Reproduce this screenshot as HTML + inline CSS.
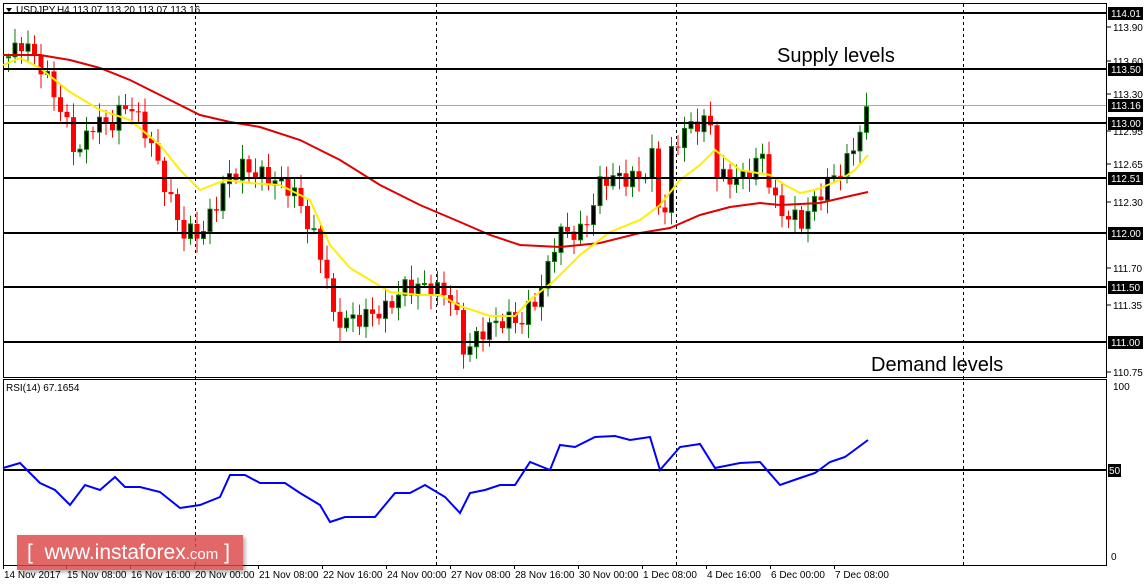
<!DOCTYPE html>
<html><head><meta charset="utf-8"><style>
body{margin:0;width:1147px;height:585px;overflow:hidden;background:#fff;font-family:"Liberation Sans",sans-serif}
svg{position:absolute;left:0;top:0}
.logo{position:absolute;left:17px;top:535px;width:226px;height:35px;background:rgba(220,70,70,0.82);box-shadow:2px 2px 4px rgba(0,0,0,0.35);color:#fff;font-size:21px;line-height:35px;white-space:nowrap}
</style></head><body>
<svg id="s" width="1147" height="585" xmlns="http://www.w3.org/2000/svg" font-family="Liberation Sans, sans-serif"></svg>
<div class="logo"><span style="margin-left:10px">[&nbsp; www.instaforex<span style="font-size:15px">.com</span> ]</span></div>
<script>
var s=document.getElementById('s'),h='';
function Y(p){return 13+(114.01-p)*109.3}
// frames
h+='<rect x="3.5" y="3.5" width="1103" height="374" fill="none" stroke="#000"/>';
h+='<rect x="3.5" y="379.5" width="1103" height="186" fill="none" stroke="#000"/>';
// dashed verticals
[195,436,676,963].forEach(function(x){h+='<line x1="'+x+'.5" y1="4" x2="'+x+'.5" y2="565" stroke="#000" stroke-dasharray="3,3"/>'});
// gray current line
h+='<line x1="4" y1="105.5" x2="1106" y2="105.5" stroke="#aaa"/>';
// MAs
function pl(pts,c,w){h+='<polyline fill="none" stroke="'+c+'" stroke-width="'+w+'" points="'+pts.map(function(p){return p.join(',')}).join(' ')+'"/>'}
var yel=[[3,65],[20,58],[40,68],[70,92],[100,110],[130,120],[160,145],[180,170],[200,190],[225,180],[250,183],[280,185],[310,200],[330,245],[350,268],[370,280],[390,292],[420,295],[440,295],[460,306],[490,316],[515,316],[530,300],[555,280],[580,255],[610,232],[640,220],[660,205],[680,180],[700,165],[715,150],[740,170],[770,175],[785,185],[800,193],[815,190],[840,180],[855,170],[868,155]];
var red=[[3,55],[40,55],[70,60],[100,68],[130,80],[170,100],[200,115],[230,122],[260,127],[300,140],[340,160],[380,185],[420,205],[460,222],[490,235],[520,245],[560,247],[600,243],[640,233],[670,228],[700,215],[730,207],[760,203],[780,205],[820,203],[850,196],[868,192]];
// candles
var kp=[[5,113.6],[20,113.75],[40,113.5],[60,113.1],[75,112.7],[90,113.0],[110,113.0],[125,113.2],[145,112.9],[160,112.5],[180,112.0],[200,112.0],[225,112.5],[240,112.6],[265,112.5],[290,112.4],[310,112.0],[325,111.6],[330,111.2],[350,111.2],[385,111.3],[400,111.5],[430,111.5],[450,111.4],[462,110.9],[480,111.1],[500,111.2],[520,111.2],[540,111.5],[555,112.0],[580,112.0],[600,112.5],[615,112.5],[640,112.5],[650,112.7],[660,112.0],[670,112.8],[690,113.0],[710,113.0],[715,112.5],[740,112.5],[760,112.7],[775,112.2],[800,112.1],[820,112.4],[845,112.65],[860,113.0],[868,113.16]];
function ip(x){for(var i=1;i<kp.length;i++){if(x<=kp[i][0]){var a=kp[i-1],b=kp[i];return a[1]+(b[1]-a[1])*(x-a[0])/(b[0]-a[0])}}return kp[kp.length-1][1]}
var prev=113.6,i=0;
for(var x=6;x<=868;x+=6.5,i++){
 var c=ip(x)+Math.sin(i*2.3)*0.08,o=prev,hi=Math.max(o,c)+0.03+Math.abs(Math.sin(i*1.7))*0.1,lo=Math.min(o,c)-0.03-Math.abs(Math.cos(i*1.3))*0.1;
 var up=c>=o,col=up?'#0a7a0a':'#f00';
 h+='<line x1="'+(x+2.5)+'" y1="'+Y(hi)+'" x2="'+(x+2.5)+'" y2="'+Y(lo)+'" stroke="'+col+'"/>';
 var t=Y(Math.max(o,c)),bh=Math.max(1,Y(Math.min(o,c))-t);
 h+=up?'<rect x="'+(x+0.5)+'" y="'+t+'" width="4" height="'+bh+'" fill="#000" stroke="#0a7a0a"/>':'<rect x="'+x+'" y="'+t+'" width="5" height="'+bh+'" fill="#f00"/>';
 prev=c;
}
pl(red,'#e00000',2);pl(yel,'#ffee00',2);
// levels
[13,69,123,178,233,287,342].forEach(function(y){h+='<line x1="4" y1="'+y+'" x2="1106" y2="'+y+'" stroke="#000" stroke-width="2"/>'});
h+='<line x1="4" y1="470" x2="1106" y2="470" stroke="#000" stroke-width="2"/>';
// RSI
pl([[3,468],[20,463],[40,483],[55,490],[70,505],[85,485],[100,490],[115,477],[125,487],[140,487],[160,492],[180,508],[200,505],[220,497],[230,475],[245,475],[260,483],[285,483],[300,493],[320,505],[330,522],[345,517],[375,517],[395,493],[410,493],[425,485],[445,497],[460,513],[470,493],[485,490],[500,485],[515,485],[530,462],[550,470],[560,445],[575,447],[595,437],[615,436],[630,440],[650,437],[660,470],[680,447],[700,444],[715,468],[740,463],[760,462],[780,485],[800,478],[815,473],[830,462],[845,457],[868,440]],'#0000ff',2);
// texts
h+='<text x="16" y="13" font-size="10">USDJPY,H4  113.07 113.20 113.07 113.16</text><path d="M6 8h6l-3 4z" fill="#000"/>';
h+='<text x="6" y="391" font-size="10">RSI(14) 67.1654</text>';
h+='<text x="777" y="62" font-size="20">Supply levels</text><text x="871" y="371" font-size="20">Demand levels</text>';
// right axis
[[113.90,27],[113.60,61],[113.30,94],[112.95,131],[112.65,164],[112.30,202],[111.70,268],[111.35,305],[110.75,372]].forEach(function(a){h+='<line x1="1107" y1="'+a[1]+'" x2="1111" y2="'+a[1]+'" stroke="#000"/><text x="1113" y="'+(a[1]+4)+'" font-size="10">'+a[0].toFixed(2)+'</text>'});
[['114.01',13],['113.50',69],['113.16',105],['113.00',123],['112.51',178],['112.00',233],['111.50',287],['111.00',342]].forEach(function(a){h+='<rect x="1108" y="'+(a[1]-6)+'" width="35" height="13" fill="#000"/><text x="1111" y="'+(a[1]+4)+'" font-size="10" fill="#fff">'+a[0]+'</text>'});
h+='<text x="1113" y="390" font-size="10">100</text><rect x="1108" y="464" width="13" height="13" fill="#000"/><text x="1109" y="474" font-size="10" fill="#fff">50</text><text x="1111" y="560" font-size="10">0</text>';
// bottom axis
[['14 Nov 2017',3],['15 Nov 08:00',66],['16 Nov 16:00',130],['20 Nov 00:00',194],['21 Nov 08:00',258],['22 Nov 16:00',322],['24 Nov 00:00',386],['27 Nov 08:00',450],['28 Nov 16:00',514],['30 Nov 00:00',578],['1 Dec 08:00',642],['4 Dec 16:00',706],['6 Dec 00:00',770],['7 Dec 08:00',834]].forEach(function(a){h+='<line x1="'+(a[1]+0.5)+'" y1="565" x2="'+(a[1]+0.5)+'" y2="569" stroke="#000"/><text x="'+(a[1]+1)+'" y="578" font-size="10">'+a[0]+'</text>'});
s.innerHTML=h;
</script>
</body></html>
